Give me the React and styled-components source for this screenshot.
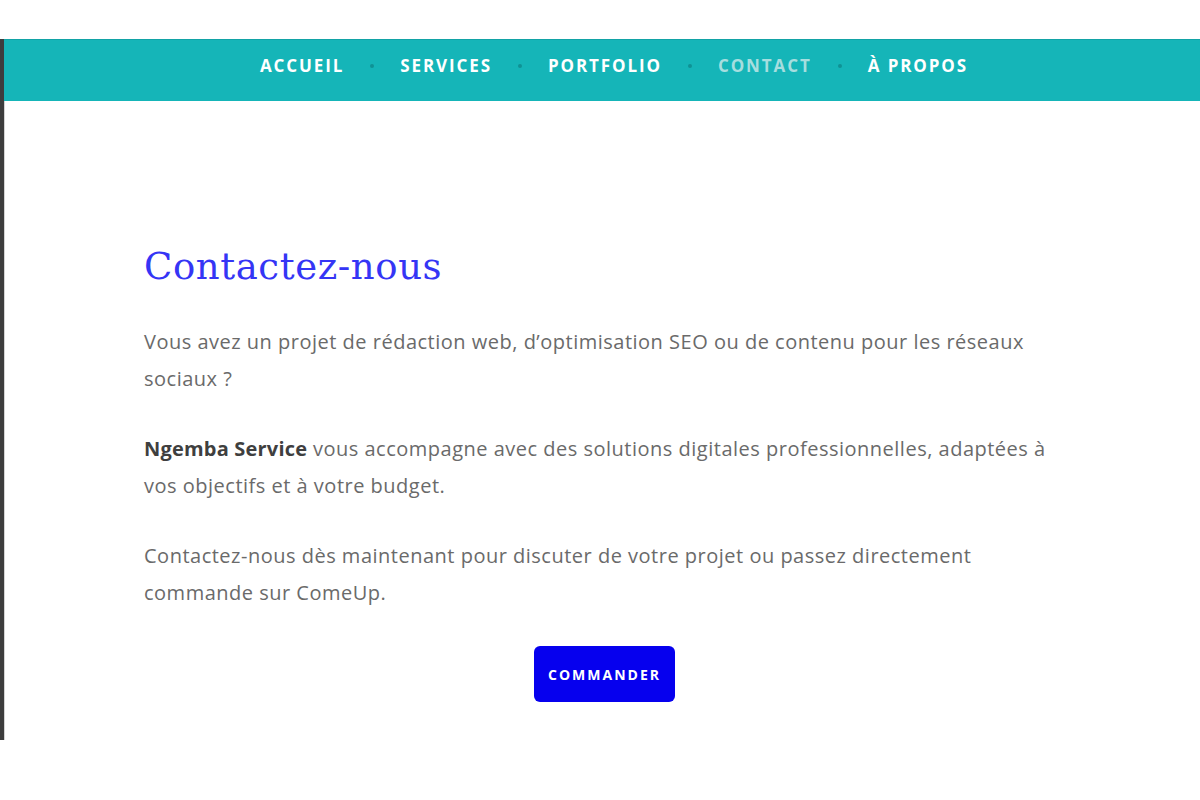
import React from 'react'
import styled, {createGlobalStyle} from 'styled-components'

const GlobalStyle = createGlobalStyle`
  html, body {
    margin: 0;
    padding: 0;
    background: #ffffff;
  }
  body {
    font-family: "Open Sans", "Liberation Sans", sans-serif;
  }
`;

const links = [
  {label: 'ACCUEIL'},
  {label: 'SERVICES'},
  {label: 'PORTFOLIO'},
  {label: 'CONTACT', active: true},
  {label: 'À PROPOS'},
];

function App() {
  return <>
    <GlobalStyle />
    <Frame>
      <NavBar>
        <NavList>
          {links.map((l, i) => (
            <React.Fragment key={l.label}>
              {i > 0 && <Dot />}
              <NavLink $active={l.active}>{l.label}</NavLink>
            </React.Fragment>
          ))}
        </NavList>
      </NavBar>
      <Content>
        <Title>Contactez-nous</Title>
        <Text>
          Vous avez un projet de rédaction web, d’optimisation SEO ou de contenu pour les réseaux sociaux ?
        </Text>
        <Text>
          <strong>Ngemba Service</strong> vous accompagne avec des solutions digitales professionnelles, adaptées à vos objectifs et à votre budget.
        </Text>
        <Text>
          Contactez-nous dès maintenant pour discuter de votre projet ou passez directement commande sur ComeUp.
        </Text>
        <ButtonRow>
          <Button>COMMANDER</Button>
        </ButtonRow>
      </Content>
    </Frame>
  </>
}

export default App

const Frame = styled.div`
    margin-top: 39px;
    height: 701px;
    border-left: 4px solid #3d3d3d;
    box-shadow: inset 1px 0 0 #d4d4d4;
    background: #ffffff;
    display: flex;
    flex-direction: column;
`;
const NavBar = styled.nav`
    height: 62px;
    background: #15b5b8;
    border-top: 1px solid #12a3a6;
    box-sizing: border-box;
    display: flex;
    justify-content: center;
    align-items: center;
    padding-left: 24px;
    padding-bottom: 10px;
`;
const NavList = styled.div`
    display: flex;
    align-items: center;
    gap: 26px;
`;
const NavLink = styled.a`
    font-family: "Open Sans", "Liberation Sans", sans-serif;
    font-weight: 700;
    font-size: 17px;
    letter-spacing: 1.9px;
    color: ${p => p.$active ? '#a6dedf' : '#ffffff'};
    cursor: pointer;
`;
const Dot = styled.span`
    width: 4px;
    height: 4px;
    border-radius: 50%;
    background: #0f9295;
`;
const Content = styled.main`
    width: 921px;
    margin-left: 140px;
    padding-top: 145px;
`;
const Title = styled.h1`
    margin: 0 0 35px;
    font-family: "DejaVu Serif", "Liberation Serif", serif;
    font-weight: 400;
    font-size: 37px;
    letter-spacing: 0.6px;
    line-height: 42px;
    color: #3535f5;
`;
const Text = styled.p`
    margin: 0 0 33px;
    font-size: 20px;
    letter-spacing: 0.5px;
    line-height: 37px;
    color: #6a6a6a;
    strong{
        color: #3f3f3f;
        font-weight: 700;
        letter-spacing: 0.2px;
    }
`;
const ButtonRow = styled.div`
    display: flex;
    justify-content: center;
    margin-top: 35px;
`;
const Button = styled.button`
    width: 141px;
    height: 56px;
    border: none;
    border-radius: 6px;
    background: #0600ee;
    color: #ffffff;
    font-family: "Open Sans", "Liberation Sans", sans-serif;
    font-weight: 700;
    font-size: 14px;
    letter-spacing: 2px;
    cursor: pointer;
`;
